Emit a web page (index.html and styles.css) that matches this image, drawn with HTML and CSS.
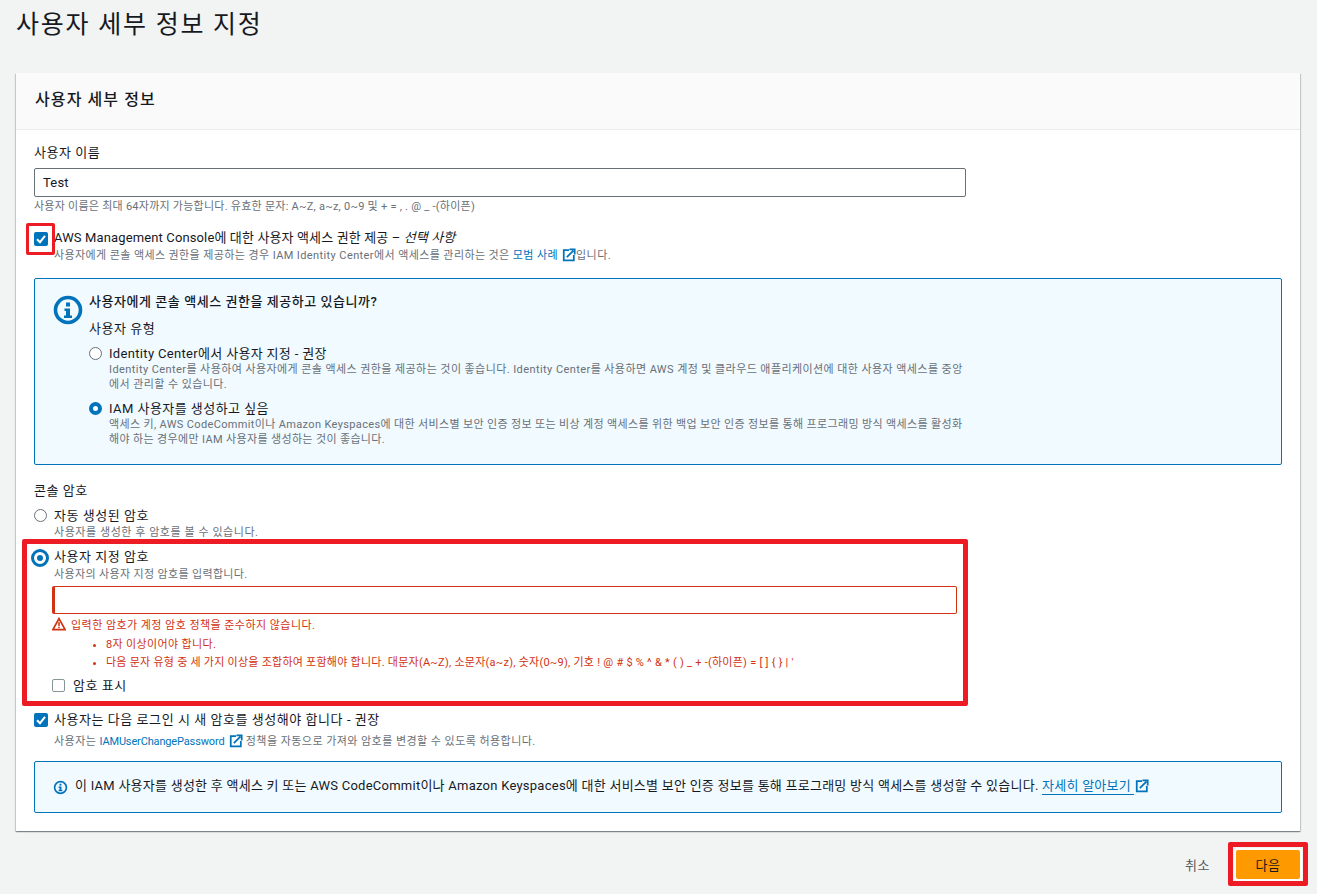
FILE: index.html
```html
<!DOCTYPE html>
<html lang="ko">
<head>
<meta charset="utf-8">
<title>사용자 세부 정보 지정</title>
<link rel="stylesheet" href="styles.css">
</head>
<body>
<svg class="defs" width="0" height="0" aria-hidden="true">
  <symbol id="ext" viewBox="0 0 16 16"><path d="M8 2.500H2v11.500h11.500V8" fill="none" stroke="currentColor" stroke-width="2"/><path d="M5.500 10.500 13 3M8.500 1.500h6v6" fill="none" stroke="currentColor" stroke-width="2"/></symbol>
  <symbol id="chk" viewBox="0 0 14 14"><path d="M3 7.200 6 10.200 11 3.800" fill="none" stroke="#fff" stroke-width="2"/></symbol>
</svg>
<main class="page">
  <h1 class="title">사용자 세부 정보 지정</h1>
  <section class="card">
    <header class="card-head"><h2>사용자 세부 정보</h2></header>
    <div class="card-body">
      <div class="label">사용자 이름</div>
      <div class="input">Test</div>
      <div class="hint name-hint">사용자 이름은 최대 64자까지 가능합니다. 유효한 문자: A~Z, a~z, 0~9 및 + = , . @ _ -(하이픈)</div>

      <div class="opt console-opt">
        <span class="box on"><svg><use href="#chk"/></svg></span>
        <div class="opt-text">
          <div class="opt-title console-title">AWS Management Console에 대한 사용자 액세스 권한 제공 – <em>선택 사항</em></div>
          <div class="hint console-hint">사용자에게 콘솔 액세스 권한을 제공하는 경우 IAM Identity Center에서 액세스를 관리하는 것은 <a>모범 사례</a> <svg class="ext"><use href="#ext"/></svg>입니다.</div>
        </div>
      </div>

      <div class="info big">
        <svg class="info-icon" viewBox="0 0 30 30" aria-hidden="true"><circle cx="15" cy="15" r="12.500" fill="none" stroke="#0073bb" stroke-width="3.600"/><rect x="13" y="7.500" width="4" height="4" fill="#0073bb"/><path d="M11.500 13.500h5.500v7h2v2.500h-8v-2.500h2v-4.500h-1.500z" fill="#0073bb"/></svg>
        <div class="info-main">
          <div class="info-title">사용자에게 콘솔 액세스 권한을 제공하고 있습니까?</div>
          <div class="label type-label">사용자 유형</div>
          <div class="opt radio-opt">
            <span class="radio"></span>
            <div class="opt-text wide">
              <div class="opt-title identity-title">Identity Center에서 사용자 지정 - 권장</div>
              <div class="hint identity-hint">Identity Center를 사용하여 사용자에게 콘솔 액세스 권한을 제공하는 것이 좋습니다. Identity Center를 사용하면 AWS 계정 및 클라우드 애플리케이션에 대한 사용자 액세스를 중앙에서 관리할 수 있습니다.</div>
            </div>
          </div>
          <div class="opt radio-opt second">
            <span class="radio on"></span>
            <div class="opt-text wide">
              <div class="opt-title iam-title">IAM 사용자를 생성하고 싶음</div>
              <div class="hint">액세스 키, AWS CodeCommit이나 Amazon Keyspaces에 대한 서비스별 보안 인증 정보 또는 비상 계정 액세스를 위한 백업 보안 인증 정보를 통해 프로그래밍 방식 액세스를 활성화해야 하는 경우에만 IAM 사용자를 생성하는 것이 좋습니다.</div>
            </div>
          </div>
        </div>
      </div>

      <div class="label pw-label">콘솔 암호</div>
      <div class="opt auto-opt">
        <span class="radio"></span>
        <div class="opt-text">
          <div class="opt-title">자동 생성된 암호</div>
          <div class="hint auto-hint">사용자를 생성한 후 암호를 볼 수 있습니다.</div>
        </div>
      </div>
      <div class="opt custom-opt">
        <span class="radio big-radio"></span>
        <div class="opt-text">
          <div class="opt-title">사용자 지정 암호</div>
          <div class="hint custom-hint">사용자의 사용자 지정 암호를 입력합니다.</div>
        </div>
      </div>
      <div class="pw-block">
        <div class="input error"></div>
        <div class="err-line">
          <svg class="warn" viewBox="0 0 16 16" aria-hidden="true"><path d="M8 1.800 15 14.500H1z" fill="none" stroke="#d13212" stroke-width="2"/><path d="M7.100 6h1.800v4.500H7.100zM7.100 11.300h1.800v1.600H7.100z" fill="#d13212"/></svg>
          <span>입력한 암호가 계정 암호 정책을 준수하지 않습니다.</span>
        </div>
        <ul class="err-list">
          <li>8자 이상이어야 합니다.</li>
          <li class="err-long">다음 문자 유형 중 세 가지 이상을 조합하여 포함해야 합니다. 대문자(A~Z), 소문자(a~z), 숫자(0~9), 기호 ! @ # $ % ^ &amp; * ( ) _ + -(하이픈) = [ ] { } | '</li>
        </ul>
        <div class="show-pw"><span class="box off"></span><span class="opt-title">암호 표시</span></div>
      </div>
      <div class="opt reset-opt">
        <span class="box on"><svg><use href="#chk"/></svg></span>
        <div class="opt-text">
          <div class="opt-title">사용자는 다음 로그인 시 새 암호를 생성해야 합니다 - 권장</div>
          <div class="hint reset-hint">사용자는 <a>IAMUserChangePassword</a> <svg class="ext"><use href="#ext"/></svg> 정책을 자동으로 가져와 암호를 변경할 수 있도록 허용합니다.</div>
        </div>
      </div>
      <div class="info small">
        <svg class="info-small" viewBox="0 0 16 16" aria-hidden="true"><circle cx="8" cy="8" r="6.300" fill="none" stroke="#0073bb" stroke-width="1.800"/><rect x="7" y="4" width="2" height="2" fill="#0073bb"/><path d="M6 7h3v3.500h1V12H6v-1.500h1V8.500H6z" fill="#0073bb"/></svg>
        <div class="info-note">이 IAM 사용자를 생성한 후 액세스 키 또는 AWS CodeCommit이나 Amazon Keyspaces에 대한 서비스별 보안 인증 정보를 통해 프로그래밍 방식 액세스를 생성할 수 있습니다. <a class="under">자세히 알아보기 </a> <svg class="ext"><use href="#ext"/></svg></div>
      </div>
    </div>
  </section>
  <footer class="actions">
    <button class="cancel" type="button">취소</button>
    <button class="next" type="button">다음</button>
  </footer>
</main>
<div class="mark mark-check"></div>
<div class="mark mark-custom"></div>
<div class="mark mark-next"></div>
</body>
</html>
```

FILE: styles.css
```css
* { box-sizing: border-box; }
html, body { margin: 0; padding: 0; }
body {
  position: relative;
  width: 1317px;
  height: 894px;
  overflow: hidden;
  background: #f2f3f3;
  color: #16191f;
  font-family: Roboto, "Noto Sans CJK KR", sans-serif;
  font-size: 12px;
}
.defs { position: absolute; }
.page { padding: 0 17px 0 16px; }
.title {
  margin: 0;
  height: 73px;
  padding: 8px 0 0 0;
  font-size: 25px;
  line-height: 34px;
  font-weight: 400;
  letter-spacing: 1.75px;
  color: #16191f;
}
.card {
  background: #fff;
  height: 758px;
  box-shadow: 0 1px 1px 0 rgba(0,28,36,.3), 1px 1px 1px 0 rgba(0,28,36,.15), -1px 1px 1px 0 rgba(0,28,36,.15);
}
.card-head {
  height: 57px;
  background: #fafafa;
  border-bottom: 1px solid #eaeded;
  padding: 16px 19px 0;
}
.card-head h2 { margin: 0; font-size: 16px; line-height: 22px; font-weight: 500; letter-spacing: 1.1px; }
.card-body { padding: 14px 18px 0; }
.label { font-size: 13px; line-height: 18px; letter-spacing: .55px; color: #16191f; }
.input {
  width: 932px;
  height: 29px;
  margin-top: 6px;
  padding: 0 8px;
  border: 1px solid #687078;
  border-radius: 2px;
  background: #fff;
  font-size: 13px;
  line-height: 27px;
  letter-spacing: .2px;
}
.hint { font-size: 11px; line-height: 15px; color: #687078; letter-spacing: .35px; }
.name-hint { margin-top: 2px; letter-spacing: .25px; }
a { color: #0073bb; }
.ext { width: 14px; height: 14px; margin-left: 1px; color: #0073bb; vertical-align: -3px; }
.opt { display: flex; align-items: flex-start; }
.opt-title { font-size: 13px; line-height: 17px; letter-spacing: .55px; }
.opt-title em { font-style: italic; }
.console-opt { margin-top: 15px; }
.console-title { letter-spacing: .13px; }
.console-hint { margin-top: 2px; letter-spacing: .4px; }
.box { flex: none; display: block; width: 14px; height: 14px; border-radius: 2px; }
.box svg { display: block; width: 14px; height: 14px; }
.box.on { background: #0073bb; }
.box.off { width: 13px; height: 13px; border: 1px solid #879596; background: #fff; }
.console-opt .box { margin: 3px 6px 0 0; }
.radio { flex: none; display: block; width: 13px; height: 13px; border-radius: 50%; border: 1px solid #687078; background: #fff; margin: 2px 7px 0 0; }
.radio.on { border: 4px solid #0073bb; }
.info { display: flex; border: 1px solid #0073bb; border-radius: 2px; background: #f1faff; }
.info.big { height: 187px; width: 1248px; margin-top: 15px; padding: 14px 0 0 18px; }
.info-icon { flex: none; width: 30px; height: 30px; margin: 2px 6px 0 0; }
.info-title { font-size: 13px; line-height: 18px; font-weight: 500; letter-spacing: .55px; }
.type-label { margin-top: 9px; }
.radio-opt { margin-top: 7px; }
.radio-opt .radio { margin-right: 7px; }
.radio-opt.second { margin-top: 8px; }
.wide { width: 860px; }
.identity-title { letter-spacing: .33px; }
.identity-hint { letter-spacing: .42px; }
.iam-title { letter-spacing: .45px; }
.pw-label { margin-top: 17px; }
.auto-opt { margin-top: 7px; }
.auto-hint { margin-top: 1px; letter-spacing: .55px; }
.custom-opt { margin-top: 8px; }
.big-radio { width: 18px; height: 18px; margin: 1px 5px 0 -3px; border: 3px solid #0073bb; }
.big-radio::after { content: ""; display: block; width: 6px; height: 6px; border-radius: 50%; background: #0073bb; margin: 3px; }
.custom-hint { margin-top: 2px; }
.pw-block { padding-left: 18px; }
.input.error { width: 905px; height: 28px; margin-top: 4px; border: 1px solid #d13212; border-left-width: 3px; }
.err-line { display: flex; align-items: center; height: 17px; margin-top: 1px; color: #d13212; font-size: 11px; letter-spacing: .45px; }
.warn { width: 14px; height: 14px; margin-right: 5px; }
.err-list { margin: 4px 0 0; padding: 0 0 0 54px; color: #d13212; font-size: 11px; line-height: 18px; letter-spacing: .35px; }
.err-long { letter-spacing: .25px; }
.show-pw { display: flex; align-items: center; height: 18px; margin-top: 4px; }
.show-pw .box { margin-right: 8px; }
.reset-opt { margin-top: 17px; }
.reset-opt .box { margin: 2px 6px 0 0; }
.reset-hint { margin-top: 6px; letter-spacing: .45px; }
.reset-hint a { letter-spacing: -.15px; }
.info.small { height: 52px; width: 1248px; margin-top: 12px; align-items: center; padding: 0 0 0 18px; }
.info-small { flex: none; width: 15px; height: 15px; margin-right: 7px; }
.info-note { font-size: 13px; line-height: 18px; letter-spacing: .25px; margin-top: -3px; }
.under { border-bottom: 1px solid #0073bb; padding-bottom: 1px; }
.actions { display: flex; justify-content: flex-end; align-items: center; gap: 26px; height: 29px; margin-top: 19px; }
button { font-family: inherit; font-size: 13px; letter-spacing: .5px; }
.cancel { border: 0; background: none; color: #545b64; padding: 0; }
.next { width: 64px; height: 29px; border: 0; border-radius: 2px; background: #ff9900; color: #16191f; padding: 0; box-shadow: 0 0 0 2px #fff; }
.mark { position: absolute; border-style: solid; border-color: #ed1c24; border-radius: 2px; }
.mark-check { left: 26px; top: 223px; width: 29px; height: 32px; border-width: 3px; }
.mark-custom { left: 22px; top: 539px; width: 946px; height: 167px; border-width: 5px; }
.mark-next { left: 1228px; top: 842px; width: 80px; height: 44px; border-width: 5px; }
```
